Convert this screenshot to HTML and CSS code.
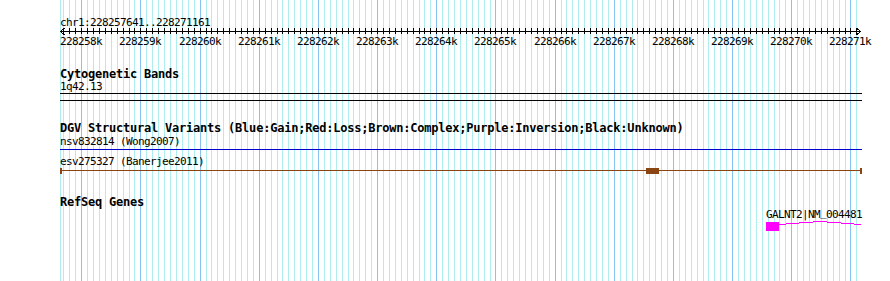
FILE: index.html
```html
<!DOCTYPE html>
<html lang="en">
<head>
<meta charset="utf-8">
<title>chr1:228257641..228271161</title>
<link rel="stylesheet" href="styles.css">
</head>
<body>
<div class="panel">
  <svg class="grid" width="890" height="281" viewBox="0 0 890 281" aria-hidden="true">
    <path class="grid-minor" d="M60.5 0V281M63.5 0V281M69.5 0V281M75.5 0V281M87.5 0V281M93.5 0V281M99.5 0V281M105.5 0V281M111.5 0V281M117.5 0V281M123.5 0V281M129.5 0V281M134.5 0V281M146.5 0V281M152.5 0V281M158.5 0V281M164.5 0V281M170.5 0V281M176.5 0V281M182.5 0V281M188.5 0V281M194.5 0V281M206.5 0V281M211.5 0V281M217.5 0V281M223.5 0V281M229.5 0V281M235.5 0V281M241.5 0V281M247.5 0V281M253.5 0V281M265.5 0V281M271.5 0V281M277.5 0V281M282.5 0V281M288.5 0V281M294.5 0V281M300.5 0V281M306.5 0V281M312.5 0V281M324.5 0V281M330.5 0V281M336.5 0V281M342.5 0V281M348.5 0V281M353.5 0V281M359.5 0V281M365.5 0V281M371.5 0V281M383.5 0V281M389.5 0V281M395.5 0V281M401.5 0V281M407.5 0V281M413.5 0V281M419.5 0V281M424.5 0V281M430.5 0V281M442.5 0V281M448.5 0V281M454.5 0V281M460.5 0V281M466.5 0V281M472.5 0V281M478.5 0V281M484.5 0V281M490.5 0V281M501.5 0V281M507.5 0V281M513.5 0V281M519.5 0V281M525.5 0V281M531.5 0V281M537.5 0V281M543.5 0V281M549.5 0V281M561.5 0V281M566.5 0V281M572.5 0V281M578.5 0V281M584.5 0V281M590.5 0V281M596.5 0V281M602.5 0V281M608.5 0V281M620.5 0V281M626.5 0V281M632.5 0V281M637.5 0V281M643.5 0V281M649.5 0V281M655.5 0V281M661.5 0V281M667.5 0V281M679.5 0V281M685.5 0V281M691.5 0V281M697.5 0V281M703.5 0V281M708.5 0V281M714.5 0V281M720.5 0V281M726.5 0V281M738.5 0V281M744.5 0V281M750.5 0V281M756.5 0V281M762.5 0V281M768.5 0V281M774.5 0V281M779.5 0V281M785.5 0V281M797.5 0V281M803.5 0V281M809.5 0V281M815.5 0V281M821.5 0V281M827.5 0V281M833.5 0V281M839.5 0V281M845.5 0V281M856.5 0V281"/>
    <path class="grid-major" d="M81.5 0V281M140.5 0V281M200.5 0V281M259.5 0V281M318.5 0V281M377.5 0V281M436.5 0V281M495.5 0V281M555.5 0V281M614.5 0V281M673.5 0V281M732.5 0V281M791.5 0V281M850.5 0V281"/>
  </svg>

  <div class="content">
    <section class="track ruler-track">
      <div class="label">chr1:228257641..228271161</div>
      <svg class="ruler" width="802" height="6" viewBox="60 29 802 6" aria-hidden="true">
        <path class="ruler-line" d="M60 31.5H861"/>
        <path class="ruler-ticks" d="M63.5 28v6M69.5 28v6M75.5 28v6M81.5 28v6M87.5 28v6M93.5 28v6M99.5 28v6M105.5 28v6M111.5 28v6M117.5 28v6M123.5 28v6M129.5 28v6M134.5 28v6M140.5 28v6M146.5 28v6M152.5 28v6M158.5 28v6M164.5 28v6M170.5 28v6M176.5 28v6M182.5 28v6M188.5 28v6M194.5 28v6M200.5 28v6M206.5 28v6M211.5 28v6M217.5 28v6M223.5 28v6M229.5 28v6M235.5 28v6M241.5 28v6M247.5 28v6M253.5 28v6M259.5 28v6M265.5 28v6M271.5 28v6M277.5 28v6M282.5 28v6M288.5 28v6M294.5 28v6M300.5 28v6M306.5 28v6M312.5 28v6M318.5 28v6M324.5 28v6M330.5 28v6M336.5 28v6M342.5 28v6M348.5 28v6M353.5 28v6M359.5 28v6M365.5 28v6M371.5 28v6M377.5 28v6M383.5 28v6M389.5 28v6M395.5 28v6M401.5 28v6M407.5 28v6M413.5 28v6M419.5 28v6M424.5 28v6M430.5 28v6M436.5 28v6M442.5 28v6M448.5 28v6M454.5 28v6M460.5 28v6M466.5 28v6M472.5 28v6M478.5 28v6M484.5 28v6M490.5 28v6M495.5 28v6M501.5 28v6M507.5 28v6M513.5 28v6M519.5 28v6M525.5 28v6M531.5 28v6M537.5 28v6M543.5 28v6M549.5 28v6M555.5 28v6M561.5 28v6M566.5 28v6M572.5 28v6M578.5 28v6M584.5 28v6M590.5 28v6M596.5 28v6M602.5 28v6M608.5 28v6M614.5 28v6M620.5 28v6M626.5 28v6M632.5 28v6M637.5 28v6M643.5 28v6M649.5 28v6M655.5 28v6M661.5 28v6M667.5 28v6M673.5 28v6M679.5 28v6M685.5 28v6M691.5 28v6M697.5 28v6M703.5 28v6M708.5 28v6M714.5 28v6M720.5 28v6M726.5 28v6M732.5 28v6M738.5 28v6M744.5 28v6M750.5 28v6M756.5 28v6M762.5 28v6M768.5 28v6M774.5 28v6M779.5 28v6M785.5 28v6M791.5 28v6M797.5 28v6M803.5 28v6M809.5 28v6M815.5 28v6M821.5 28v6M827.5 28v6M833.5 28v6M839.5 28v6M845.5 28v6M850.5 28v6M856.5 28v6"/>
        <path class="ruler-line" d="M64.5 28L60.5 31.5L64.5 35M856.5 28L860.5 31.5L856.5 35"/>
      </svg>
      <div class="tick-labels">
        <span class="tick-label" style="left:21px">228258k</span>
        <span class="tick-label" style="left:80px">228259k</span>
        <span class="tick-label" style="left:140px">228260k</span>
        <span class="tick-label" style="left:199px">228261k</span>
        <span class="tick-label" style="left:258px">228262k</span>
        <span class="tick-label" style="left:317px">228263k</span>
        <span class="tick-label" style="left:376px">228264k</span>
        <span class="tick-label" style="left:435px">228265k</span>
        <span class="tick-label" style="left:495px">228266k</span>
        <span class="tick-label" style="left:554px">228267k</span>
        <span class="tick-label" style="left:613px">228268k</span>
        <span class="tick-label" style="left:672px">228269k</span>
        <span class="tick-label" style="left:731px">228270k</span>
        <span class="tick-label" style="left:790px">228271k</span>
      </div>
    </section>

    <section class="track cyto-track">
      <div class="title">Cytogenetic Bands</div>
      <div class="label">1q42.13</div>
      <div class="band"></div>
    </section>

    <section class="track dgv-track">
      <div class="title">DGV Structural Variants (Blue:Gain;Red:Loss;Brown:Complex;Purple:Inversion;Black:Unknown)</div>
      <div class="label label-first">nsv832814 (Wong2007)</div>
      <div class="gain-line"></div>
      <div class="label label-second">esv275327 (Banerjee2011)</div>
      <svg class="feature" width="802" height="6" viewBox="60 168 802 6" aria-hidden="true">
        <rect class="complex" x="60" y="170" width="802" height="1"/>
        <rect class="complex" x="60" y="168" width="2" height="6"/>
        <rect class="complex" x="860" y="168" width="2" height="6"/>
        <rect class="complex" x="646" y="168" width="13" height="6"/>
      </svg>
    </section>

    <section class="track refseq-track">
      <div class="title">RefSeq Genes</div>
      <div class="gene" style="margin-left:706px">
        <div class="label">GALNT2|NM<span class="raised">_</span>004481</div>
        <svg class="gene-model" width="96" height="10" viewBox="766 221 96 10" aria-hidden="true">
          <rect class="exon" x="766" y="222" width="13" height="9"/>
          <polyline class="intron" points="779,224.5 820,221.5 861,224.5"/>
        </svg>
      </div>
    </section>
  </div>
</div>
</body>
</html>
```

FILE: styles.css
```css
html, body {
  margin: 0;
  padding: 0;
  background: #ffffff;
}

.panel {
  position: relative;
  width: 890px;
  height: 281px;
  overflow: hidden;
  background: #ffffff;
  color: #000000;
  font-family: "DejaVu Sans Mono", "Liberation Mono", monospace;
}

.grid {
  position: absolute;
  top: 0;
  left: 0;
  display: block;
  shape-rendering: crispEdges;
}

.grid-minor {
  stroke: #aeeeee;
  stroke-width: 1;
  fill: none;
}

.grid-major {
  stroke: #86c2f2;
  stroke-width: 1;
  fill: none;
}

.content {
  position: relative;
  padding: 16px 0 0 60px;
}

.track {
  display: block;
}

.label {
  font-size: 11px;
  letter-spacing: -0.62px;
  line-height: 13px;
  height: 13px;
  white-space: nowrap;
}

.raised {
  position: relative;
  top: -2px;
}

.title {
  font-size: 12px;
  letter-spacing: -0.22px;
  font-weight: bold;
  line-height: 12px;
  height: 12px;
  white-space: nowrap;
}

.ruler {
  display: block;
  overflow: visible;
  shape-rendering: crispEdges;
}

.ruler-line,
.ruler-ticks {
  stroke: #000000;
  stroke-width: 1;
  fill: none;
}

.tick-labels {
  position: relative;
  height: 13px;
  font-size: 11px;
  letter-spacing: -0.62px;
  line-height: 13px;
}

.tick-label {
  position: absolute;
  top: 0;
  transform: translateX(-50%);
  white-space: nowrap;
}

.cyto-track {
  margin-top: 20px;
}

.band {
  width: 802px;
  height: 6px;
  border-top: 1px solid #000000;
  border-bottom: 1px solid #000000;
}

.dgv-track {
  margin-top: 21px;
}

.label-first {
  margin-top: 1px;
}

.gain-line {
  width: 802px;
  height: 1px;
  margin-top: 1px;
  background: #0000cc;
}

.label-second {
  margin-top: 5px;
}

.feature {
  display: block;
  shape-rendering: crispEdges;
}

.complex {
  fill: #8b4513;
}

.refseq-track {
  margin-top: 22px;
}

.gene {
  width: 96px;
}

.gene-model {
  display: block;
  overflow: visible;
  shape-rendering: crispEdges;
}

.exon {
  fill: #ff00ff;
}

.intron {
  fill: none;
  stroke: #ff00ff;
  stroke-width: 1;
}
```
